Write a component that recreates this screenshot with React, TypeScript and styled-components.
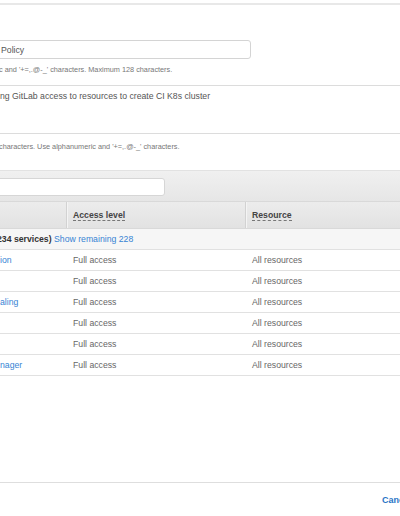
import React from "react";
import styled, { createGlobalStyle } from "styled-components";

const GlobalStyle = createGlobalStyle`
    html, body {
        margin: 0;
        padding: 0;
        background: #ffffff;
    }
    body {
        font-family: "Liberation Sans", Arial, sans-serif;
        color: #444;
    }
`;

const Viewport = styled.div`
    width: 400px;
    height: 516px;
    overflow: hidden;
    display: flex;
    flex-direction: column;
`;

const TopRule = styled.div`
    margin-top: 3px;
    height: 2px;
    background: #e8e8e8;
`;

const NameInput = styled.input`
    box-sizing: border-box;
    margin: 35px 0 0 -10px;
    width: 261px;
    height: 19px;
    padding: 0 0 0 10px;
    border: 1px solid #d4d4d4;
    border-radius: 3px;
    font-family: "Liberation Sans", Arial, sans-serif;
    font-size: 8.7px;
    color: #555;
    background: #fff;
    outline: none;
`;

const Hint = styled.div<{ $top: number }>`
    margin-top: ${(p) => p.$top}px;
    margin-left: -1px;
    font-size: 7.3px;
    line-height: 9px;
    color: #777;
    white-space: nowrap;
`;

const DescBox = styled.div`
    box-sizing: border-box;
    margin: 11px 0 0 -10px;
    width: 430px;
    height: 49px;
    padding: 5px 0 0 9px;
    border: 1px solid #dcdcdc;
    font-size: 8.7px;
    line-height: 11px;
    color: #555;
    white-space: nowrap;
`;

const Panel = styled.div`
    margin: 19px 0 0 -10px;
    width: 430px;
    display: flex;
    flex-direction: column;
`;

const Toolbar = styled.div`
    box-sizing: border-box;
    height: 31px;
    padding-top: 7px;
    border-top: 1px solid #e2e2e2;
    background: linear-gradient(#f0f0f0, #e6e6e6);
`;

const Search = styled.div`
    box-sizing: border-box;
    width: 175px;
    height: 18px;
    background: #fff;
    border: 1px solid #d6d6d6;
    border-radius: 3px;
`;

const Grid = styled.div<{ $bg?: string; $h: number }>`
    display: grid;
    grid-template-columns: 76px 179px 1fr;
    box-sizing: border-box;
    height: ${(p) => p.$h}px;
    background: ${(p) => p.$bg ?? "#fff"};
    border-bottom: 1px solid #e1e1e1;
    align-items: center;
    font-size: 8.7px;
`;

const HeadRow = styled(Grid)`
    background: linear-gradient(#ececec, #e2e2e2);
    border-top: 1px solid #d9d9d9;
    border-bottom: 1px solid #d9d9d9;
    align-items: stretch;
`;

const HeadCell = styled.div<{ $divider?: boolean }>`
    display: flex;
    align-items: center;
    padding-left: 6px;
    border-left: ${(p) => (p.$divider ? "1px solid #d2d2d2" : "none")};
    box-shadow: ${(p) => (p.$divider ? "inset 1px 0 0 #f4f4f4" : "none")};
`;

const HeadLabel = styled.span`
    font-weight: bold;
    color: #444;
    border-bottom: 1px dashed #777;
    line-height: 10px;
`;

const SummaryRow = styled.div`
    box-sizing: border-box;
    height: 21px;
    padding-left: 8px;
    display: flex;
    align-items: center;
    background: #f6f6f6;
    border-bottom: 1px solid #e1e1e1;
    font-size: 8.7px;
    white-space: nowrap;
`;

const Strong = styled.span`
    font-weight: bold;
    color: #333;
    margin-left: -1px;
`;

const Link = styled.span`
    color: #3684d4;
    cursor: pointer;
`;

const Cell = styled.div<{ $first?: boolean }>`
    padding-left: ${(p) => (p.$first ? "10px" : "7px")};
    color: #666;
    white-space: nowrap;
`;

const Spacer = styled.div`
    flex: 1;
`;

const FooterRule = styled.div`
    height: 1px;
    background: #dedede;
`;

const Footer = styled.div`
    height: 33px;
    padding-left: 382px;
    display: flex;
    align-items: center;
    white-space: nowrap;
`;

const CancelButton = styled.span`
    font-size: 9px;
    font-weight: bold;
    color: #2a74c6;
    cursor: pointer;
`;

const services = ["ion", "", "aling", "", "", "nager"];

const App = () => {
    return (
        <Viewport>
            <GlobalStyle />
            <TopRule />
            <NameInput readOnly defaultValue="Policy" />
            <Hint $top={6}>c and '+=,.@-_' characters. Maximum 128 characters.</Hint>
            <DescBox>ng GitLab access to resources to create CI K8s cluster</DescBox>
            <Hint $top={8}>characters. Use alphanumeric and '+=,.@-_' characters.</Hint>
            <Panel>
                <Toolbar>
                    <Search />
                </Toolbar>
                <HeadRow $h={28}>
                    <HeadCell />
                    <HeadCell $divider>
                        <HeadLabel>Access level</HeadLabel>
                    </HeadCell>
                    <HeadCell $divider>
                        <HeadLabel>Resource</HeadLabel>
                    </HeadCell>
                </HeadRow>
                <SummaryRow>
                    <Strong>234 services)</Strong>
                    &nbsp;<Link>Show remaining 228</Link>
                </SummaryRow>
                {services.map((name, i) => (
                    <Grid $h={21} key={i}>
                        <Cell $first>
                            <Link>{name}</Link>
                        </Cell>
                        <Cell>Full access</Cell>
                        <Cell>All resources</Cell>
                    </Grid>
                ))}
            </Panel>
            <Spacer />
            <FooterRule />
            <Footer>
                <CancelButton>Cancel</CancelButton>
            </Footer>
        </Viewport>
    );
};

export default App;
